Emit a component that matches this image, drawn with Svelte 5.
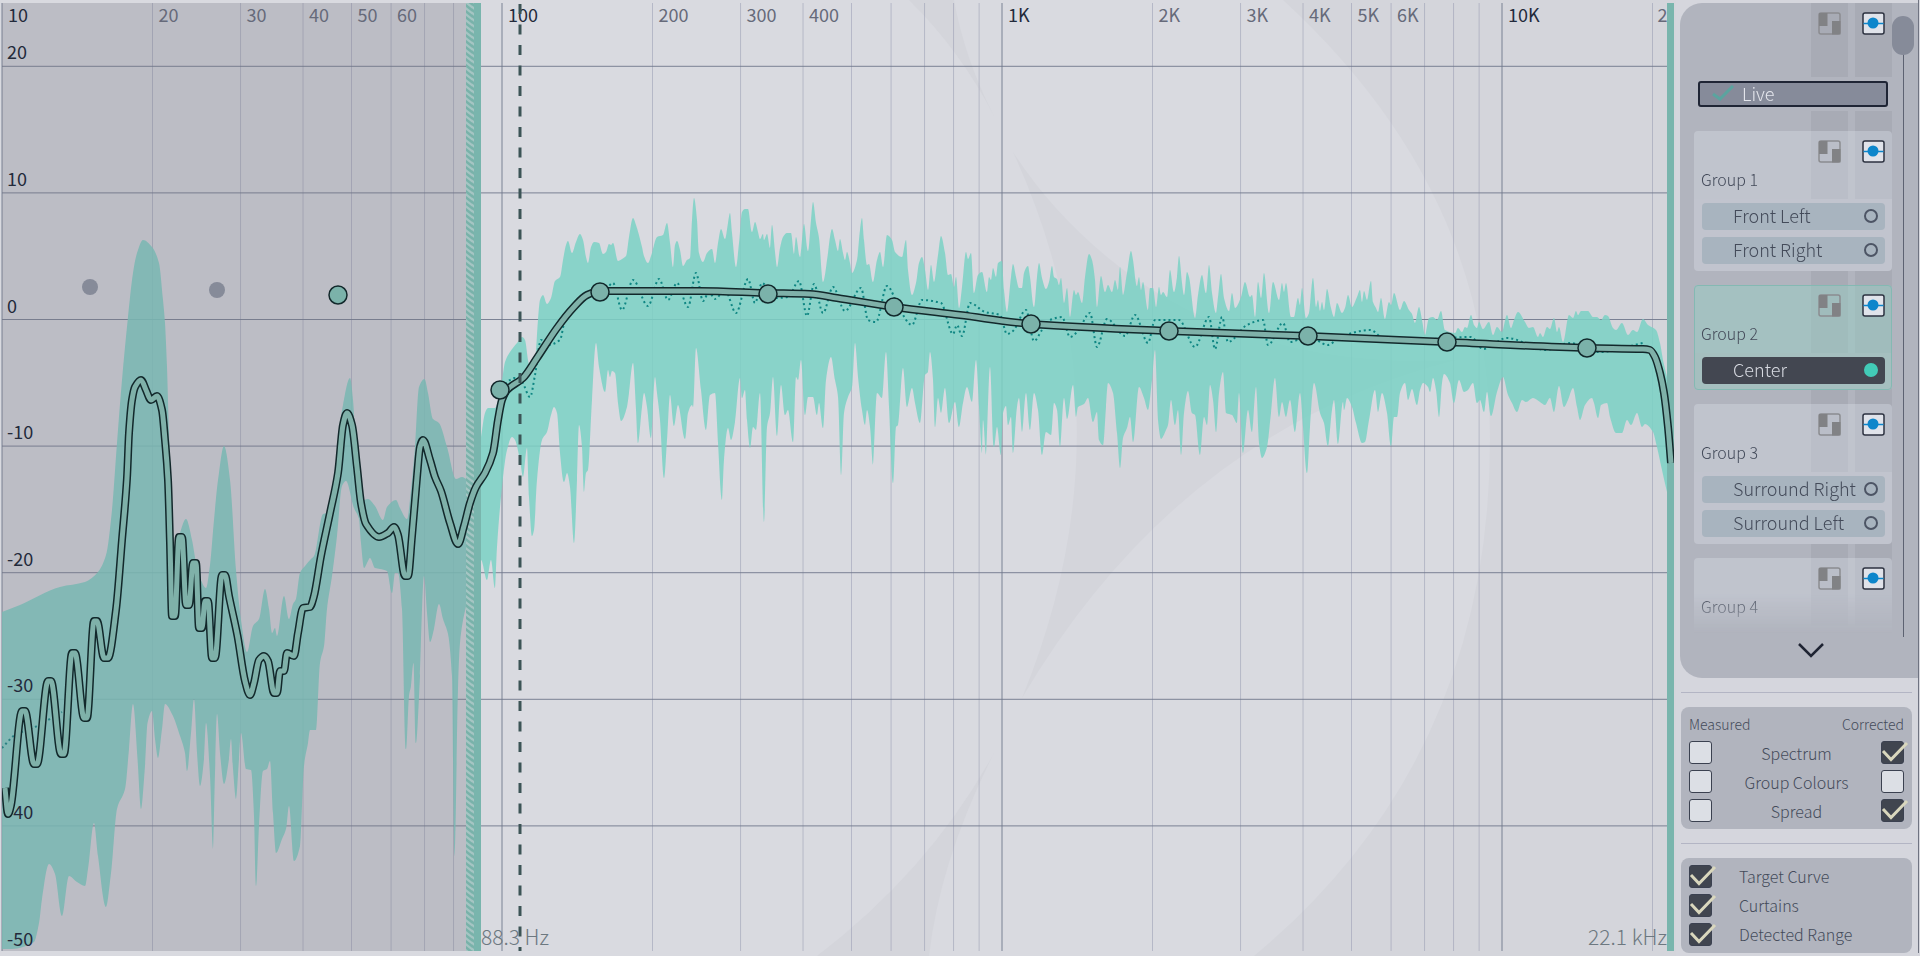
<script lang="ts">
  type Point = [number, number];

  const parse = (data: string): Point[] =>
    data.trim().split(/\s+/).map((pair) => pair.split(',').map(Number) as Point);

  // Monotone cubic through the points, so peaks stay where they were measured
  function curve(points: Point[], start = 'M'): string {
    const slope = (i: number) =>
      (points[i + 1][1] - points[i][1]) / (points[i + 1][0] - points[i][0]);
    const tangents = points.map((_, i) => {
      if (i === 0) return slope(0);
      if (i === points.length - 1) return slope(i - 1);
      const a = slope(i - 1);
      const b = slope(i);
      return a * b <= 0 ? 0 : (2 * a * b) / (a + b);
    });
    let d = `${start}${points[0][0]} ${points[0][1]}`;
    for (let i = 1; i < points.length; i++) {
      const [x0, y0] = points[i - 1];
      const [x1, y1] = points[i];
      const dx = (x1 - x0) / 3;
      d += `C${x0 + dx} ${y0 + dx * tangents[i - 1]} ${x1 - dx} ${y1 - dx * tangents[i]} ${x1} ${y1}`;
    }
    return d;
  }

  const upper = parse(`
    2,612 20,605 60,587 85,582 98,572 106,555 112,510 117,443 122,380 127.7,320 133,273 137,253 143,240 152,247 159,263
    163,300 165,323 167,367 169,433 171,480 175,560 180,533 186,519 192,540 196,562 201,580 206,588 210,565 214,520
    218,480 224,446 230,480 236,570 241,620 247,652 253,626 259,619 265,589 269,609 272,633 275,628 277,636 284,596
    289,619 293,604 296,599 300,573 305,566 311,559 314,556 323,514 327,513 334,486 338,440 343,405 350,378 353,400
    356,450 361,501 368,499 375,506 383,520 387,507 396,500 400,508 407,519 411,490 415,447 419,387 424.5,379 428,393
    433,419 439,423 447,447 456,479 462,477 467,479 475,470 481,437 485,413 488,408 495,408 502,380 505,362 510,352
    517,343 522,337 525,340 528,360 531,372 535,360 538,320 540,300 543,295 547,304 551,298 555,281 560,277 563,260
    566,245 568,241 572,253 576,242 580,234 583,240 586,257 588,263 591,247 594,242 599,243 603,254 606,252 609,244
    611,245 613,243 618,261 622,259 626,256 629,237 633,218 636,225 642,247 644,256 648,263 651,256 657,237 663,235
    667,223 670,243 673,267 675,245 677,241 680,250 683,266 687,260 690,258 692,220 694,198 697,220 699,253 703,262
    707,253 712,249 715,263 718,243 721,229 725,239 728,223 730,213 732,233 736,267 739,243 742,212 745,209 748,209
    752,232 755,222 758,232 760,239 763,234 764,240 767,234 770,248 772,225 775,252 777,267 780,248 783,237 787,233
    791,233 794,254 796,237 800,257 804,224 808,251 811,220 813,202 816,223 819,238 823,282 828,253 830,237 832,229
    835,240 838,251 840,239 843,253 845,260 847,252 850,263 852,273 857,260 860,230 862,218 864,240 867,265 869,264
    873,282 877,260 880,252 883,267 887,235 892,240 895,252 902,257 906,240 908,270 912,295 916,283 919,263 922,257
    925,270 928,290 931,265 934,282 938,255 941,236 945,253 948,275 951,274 954,287 956,277 959,308 962,287 966,252
    968,259 971,253 974,293 978,275 982,272 987,292 989,277 991,280 993,268 996,277 998,263 1002,261 1004,290 1007,312
    1011,277 1013,264 1016,277 1019,288 1022,288 1024,273 1028,266 1030,277 1034,307 1037,277 1039,263 1042,278
    1046,289 1049,282 1052,266 1054,277 1057,279 1059,285 1061,278 1064,303 1067,288 1070,317 1074,290 1076,295
    1078,292 1082,303 1085,277 1089,254 1092,260 1095,280 1097,307 1101,276 1105,292 1108,285 1112,292 1115,280
    1118,290 1120,267 1123,295 1127,273 1131,251 1133,260 1137,286 1139,277 1141,290 1143,282 1148,310 1150,288
    1153,288 1156,307 1159,287 1161,295 1163,292 1167,297 1170,270 1174,292 1177,277 1179,256 1182,283 1184,295
    1187,272 1189,277 1195,318 1198,295 1202,275 1206,293 1209,265 1212,293 1216,313 1218,297 1221,274 1224,298
    1229,311 1232,293 1235,308 1241,297 1245,282 1250,297 1252,295 1255,317 1258,282 1261,298 1264,273 1269,313
    1273,282 1279,300 1282,283 1284,292 1286,283 1291,317 1294,317 1298,298 1300,305 1302,288 1306,318 1309,313
    1313,278 1316,307 1318,300 1320,311 1322,302 1324,310 1327,289 1331,308 1334,317 1337,303 1342,313 1345,308
    1348,295 1352,307 1357,297 1360,290 1362,302 1364,291 1367,300 1371,281 1373,302 1376,308 1378,312 1381,298
    1385,319 1389,302 1391,305 1394,293 1400,310 1404,301 1409,310 1412,314 1415,323 1419,307 1422,320 1425,335
    1429,318 1433,317 1437,320 1441,311 1445,330 1455,333 1458,328 1462,332 1465,327 1467,328 1471,315 1474,325
    1477,328 1479,322 1483,329 1489,322 1493,335 1497,327 1502,332 1507,315 1511,328 1514,320 1518,312 1525,322
    1529,328 1533,327 1538,337 1540,333 1543,337 1547,327 1550,329 1554,318 1557,332 1559,327 1563,342 1569,315
    1573,318 1576,311 1578,315 1581,311 1588,311 1593,317 1597,317 1601,320 1605,315 1608,316 1613,328 1616,330
    1622,323 1628,335 1633,330 1637,332 1643,319 1648,325 1656,330 1660,343 1663,360 1667,377 1674,410`);

  const lower = parse(`
    2,949 12,949 34,942 39,923 42,899 49,864 55,874 62,916 69,876 77,882 85,886 88,869 94,823 98,856 106,907 111,873
    117,809 125,789 129,749 133,704 137.5,759 141,809 145,766 147.5,723 152,711 155,739 158,758 162,729 165,704
    173,716 179,733 185,753 187,771 191,733 194,699 197,753 200,786 204,759 206,723 210,776 213,849 215,773 217,714
    220,753 224,784 229,759 231,739 233,769 236,799 239,759 241,733 246,769 251,770 254,816 256,886 259,826 263,771
    267,769 270,761 273,813 276,853 282,839 286,829 289,806 294,861 300,846 304,766 308,743 310,730 316,730 320,663
    324,646 327,609 332,576 337,536 342,486 346,481 354,508 359,519 361,543 364,568 368,561 370,558 375,568 380,569
    387,571 392,593 395,573 398,573 402,609 406,749 409,696 411,686 413.5,663 416,743 420,676 424,576 427,613 430,642
    434,629 439,604 443,619 448,634 452,676 454.5,856 458,689 460,643 465,611 481,560 487,580 491,560 495,588 497,547
    502,487 507,450 512,437 515,440 520,460 523,477 527,448 529,497 532,536 534,530 537,480 542,440 547,432 551,415
    554,407 557,413 560,453 564,482 567,473 570,487 574,543 577,480 579,425 582,447 584,492 586,473 588,470 592,400
    596,343 599,367 605,392 608,370 610,377 612,371 615,373 618,403 621,421 627,407 629,393 633,363 636,410 638,443
    642,407 644,393 647,407 651,438 655,377 657,393 660,420 664,478 667,440 670,395 674,426 678,405 685,439 688,413
    692,405 693,407 696,348 701,390 706,430 710,395 715,393 718,443 722,500 724,460 728,428 731,440 735,422 740,378
    742,398 745,390 747,420 750,448 753,427 756,430 760,393 764,522 767,427 770,413 773,377 777,436 781,385 785,415
    788,410 793,442 796,377 798,380 801,360 805,415 808,397 813,397 817,415 819,403 823,428 826,380 831,357 835,380
    838,397 841,475 844,413 848,397 852,387 855,343 858,377 862,410 865,425 867,410 870,427 873,465 877,393 882,398
    886,352 889,407 893,483 896,427 898,425 903,368 907,407 912,388 915,403 920,423 925,375 928,372 930,352 933,380
    935,427 938,398 941,413 945,388 949,423 955,402 959,427 963,403 967,387 972,402 976,360 979,407 982,453 983,420
    986,455 990,367 994,447 997,427 1001,455 1003,413 1006,406 1008,425 1011,417 1013,453 1017,407 1019,398 1022,432
    1026,393 1030,430 1034,393 1038,410 1042,455 1046,432 1051,435 1054,403 1057,410 1060,447 1064,398 1067,419
    1073,385 1076,417 1078,407 1084,404 1088,398 1093,422 1097,412 1099,440 1103,445 1106,407 1108,383 1113,393
    1117,433 1120,468 1123,438 1127,428 1130,417 1133,442 1139,387 1144,398 1148,410 1152,380 1155,350 1158,420
    1161,439 1166,430 1168,425 1171,400 1175,425 1178,410 1181,455 1184,413 1188,391 1192,413 1195,415 1200,455
    1204,417 1207,425 1210,385 1213,400 1216,432 1219,393 1223,372 1226,413 1232,415 1237,423 1239,393 1243,453
    1248,410 1252,432 1256,387 1259,443 1262,458 1267,447 1271,413 1275,378 1279,417 1282,402 1286,417 1290,400
    1295,432 1300,393 1303,427 1307,473 1310,427 1314,383 1320,413 1324,423 1328,446 1332,410 1334,400 1338,444
    1343,402 1344,410 1347,398 1352,407 1356,423 1362,443 1365,442 1369,420 1375,390 1378,412 1382,393 1387,413
    1391,446 1394,417 1397,417 1400,393 1405,383 1408,400 1412,389 1417,405 1420,390 1423,383 1428,387 1430,392
    1433,378 1436,390 1439,417 1442,383 1444,374 1450,383 1454,403 1459,380 1464,392 1468,390 1473,383 1477,403
    1480,400 1484,412 1487,392 1491,416 1497,392 1503,377 1508,395 1512,403 1517,412 1522,400 1526,402 1533,398
    1540,402 1545,405 1550,398 1554,412 1559,386 1564,407 1568,400 1573,388 1577,407 1580,420 1585,405 1592,398
    1594,403 1598,418 1601,405 1607,403 1610,417 1616,433 1622,433 1627,420 1631,425 1637,413 1642,427 1645,424
    1653,432 1657,447 1662,470 1667,492 1674,520`);

  const spectrum = parse(`
    5,788 8,814 11,805 22,711 25,711 34,764 37,764 48,681 51,681 61,754 64,754 72,653 75,653 84,718 87,718 94,621
    97,621 104,658 108,658 116,610 122,540 127,478 129,433 132,400 135,387 141,380 146,390 151,400 157,396 162,410
    165,440 168,480 170,543 172,616 175,616 179,537 182,537 186,605 189,605 193,563 196,563 199,628 202,628 205,601
    208,601 212,658 215,658 222,575 225,575 229,596 237.5,636 245,681 250,695 254,683 259,660 264,656 268,661
    274,693 277,693 280,671 284,671 287,653 294,656 298,633 303,608 310,607 314,596 321,556 330,513 338,473 343,425
    347,413 352,425 357,467 361,503 366,524 379,537 388,533 394,527 398,535 405,576 408,576 412,536 417,477 420,447
    423,440 430,460 435,477 441,491 450,523 458,544 464,526 470,503 476,487 485,473 493,453 498,420 502,400 507,390
    523,378 537,358 557,328 573,308 587,295 600,291 700,291 767,293 810,294 837,298 894,307 960,315 1031,324
    1169,331 1308,336 1447,342 1587,348 1643,349 1650,350 1655,357 1660,373 1664,393 1668,427 1671,463`);

  const averageStart = parse('2,748 15,735 35,727 62,712');
  const average = parse(`
    502,388 510,380 515,378 522,382 530,397 535,375 541,340 548,345 560,340 565,320
    590,295 600,297 613,283 622,310 633,280 648,306 659,279 668,300 677,283 688,307 696,273 703,301 709,292 715,299
    725,290 736,313 748,279 755,303 762,283 775,298 788,297 799,281 807,316 814,284 823,313 833,287 845,311 861,288
    868,320 876,322 887,286 900,310 912,325 922,300 941,303 953,334 957,325 962,336 970,303 985,312 1000,315
    1007,334 1013,331 1026,310 1034,341 1042,330 1050,320 1062,317 1070,337 1078,331 1090,313 1097,347 1107,319
    1125,336 1135,315 1148,343 1155,320 1179,320 1195,347 1209,317 1215,349 1222,317 1228,342 1247,325 1263,320
    1268,345 1283,323 1290,342 1308,336 1328,345 1340,337 1370,330 1388,342 1471,337 1483,349 1507,338 1546,350
    1570,343 1600,352 1643,343`);

  const envelope = `${curve(upper)}${curve([...lower].reverse(), 'L')}Z`;
  const spectrumPath = curve(spectrum);
  const averagePath = curve(averageStart) + curve(average);

  const handles: Point[] = [
    [338, 295], [500, 390], [600, 292], [768, 294], [894, 307], [1031, 324],
    [1169, 331], [1308, 336], [1447, 342], [1587, 348],
  ];
  const disabledHandles: Point[] = [[90, 287], [217, 290]];

  const xAt = (hz: number) => 2 + 500 * Math.log10(hz / 10);
  const yAt = (db: number) => 319.5 - 12.66 * db;

  const frequencies = [10, 100, 1000, 10000]
    .flatMap((decade) => [1, 2, 3, 4, 5, 6, 7, 8, 9].map((step) => ({ hz: decade * step, step })))
    .filter(({ hz }) => hz <= 20000);
  const decibels = [20, 10, 0, -10, -20, -30, -40];

  const axisLabels = frequencies.filter(
    ({ hz, step }) => step < 5 || (step < 7 && (hz < 100 || hz >= 1000)),
  );
  const formatHz = (hz: number) => (hz >= 1000 ? `${hz / 1000}K` : `${hz}`);

  const groups: { name: string; active: boolean; channels: string[] }[] = [
    { name: 'Group 1', active: false, channels: ['Front Left', 'Front Right'] },
    { name: 'Group 2', active: true, channels: ['Center'] },
    { name: 'Group 3', active: false, channels: ['Surround Right', 'Surround Left'] },
    { name: 'Group 4', active: false, channels: [] },
  ];

  let spectra = $state([
    { name: 'Spectrum', measured: false, corrected: true },
    { name: 'Group Colours', measured: false, corrected: false },
    { name: 'Spread', measured: false, corrected: true },
  ]);
  let overlays = $state([
    { name: 'Target Curve', on: true },
    { name: 'Curtains', on: true },
    { name: 'Detected Range', on: true },
  ]);
</script>

{#snippet tick()}
  <svg class="box__tick" viewBox="0 0 28 24" aria-hidden="true">
    <path d="M2 10L10 18.500L26 2" />
  </svg>
{/snippet}

{#snippet viewButtons()}
  <button class="icon-button" aria-label="Split view">
    <svg viewBox="0 0 23 23">
      <rect x="1" y="1" width="21" height="21" rx="2" fill="none" stroke="#8b8c90" stroke-width="1.500" />
      <path d="M1 1h8.500v13H1zM14 9h8.500v13.500H14z" fill="#818285" />
    </svg>
  </button>
  <button class="icon-button" aria-label="Show curve">
    <svg viewBox="0 0 23 23">
      <rect x="1" y="1" width="21" height="21" rx="2" fill="#e0e3ea" stroke="#2c3240" stroke-width="1.500" />
      <path d="M1.500 11.500h20" stroke="#0d86cb" stroke-width="1.500" />
      <circle cx="11" cy="11" r="5.500" fill="#0d86cb" />
    </svg>
  </button>
{/snippet}

<div class="app">
  <main class="chart">
    <svg class="chart__plot" viewBox="0 0 1676 956" role="img" aria-label="Frequency response">
      <defs>
        <pattern id="hatch" width="8" height="6" patternUnits="userSpaceOnUse">
          <rect width="8" height="6" fill="#a5c5c3" />
          <path d="M-1 -3L9 5M-1 3L9 11" stroke="#79b2aa" stroke-width="2.500" />
        </pattern>
        <clipPath id="plot-area"><rect x="2" y="3" width="1672" height="948" /></clipPath>
      </defs>

      <g class="watermark">
        <path d="M909 0Q960 50 994 116Q965 60 954 0Z" />
        <path d="M1013 152Q1060 225 1137 280Q1270 370 1456 360Q1180 430 1022 698Q1136 420 1013 152Z" />
        <path d="M1283 0Q1490 190 1490 440Q1490 760 1254 956H1676V0Z" />
        <path d="M817 956Q930 870 994 753Q940 860 929 956Z" />
      </g>

      {#each frequencies as { hz, step }}
        <line class="grid" class:grid--major={step === 1} x1={xAt(hz)} x2={xAt(hz)} y1="3" y2="951" />
      {/each}
      {#each decibels as db}
        <line class="grid grid--major" x1="2" x2="1667" y1={yAt(db)} y2={yAt(db)} />
      {/each}

      <g clip-path="url(#plot-area)">
        <path class="envelope" d={envelope} />
        <path class="average" d={averagePath} />
      </g>

      <rect class="curtain" x="2" y="3" width="465" height="948" />
      <rect x="466" y="3" width="8" height="948" fill="url(#hatch)" />
      <rect class="curtain-edge" x="474" y="3" width="7" height="948" />

      {#each axisLabels as { hz, step }}
        {#if hz < 20000}
          <text class="axis" class:axis--major={step === 1} x={xAt(hz) + 6} y="22">{formatHz(hz)}</text>
        {:else}
          <text class="axis" x={xAt(hz) + 5} y="22">2</text>
        {/if}
      {/each}
      {#each [...decibels, -50] as db}
        <text class="axis axis--major" x="7" y={yAt(db) - 7}>{db}</text>
      {/each}

      <rect class="curtain-edge" x="1667" y="3" width="7" height="948" />

      <g clip-path="url(#plot-area)">
        <path class="spectrum-outline" d={spectrumPath} />
        <path class="spectrum" d={spectrumPath} />
      </g>
      <line class="cursor" x1="520" x2="520" y1="4" y2="951" />

      {#each disabledHandles as [cx, cy]}
        <circle class="handle handle--disabled" {cx} {cy} r="8" />
      {/each}
      {#each handles as [cx, cy]}
        <circle class="handle" {cx} {cy} r="9" />
      {/each}

      <text class="limit" x="481" y="945">88.3 Hz</text>
      <text class="limit" x="1667" y="945" text-anchor="end">22.1 kHz</text>
    </svg>
  </main>

  <aside class="sidebar">
    <section class="panel">
      <div class="panel__body">
        <div class="list">
          <div class="list__header list__header--top">
            <span></span>
            {@render viewButtons()}
          </div>
          <div class="live">
            <button class="live__button">
              <svg viewBox="0 0 22 16" aria-hidden="true"><path d="M1 9L8 14L21 1" /></svg>
              Live
            </button>
          </div>
          <div class="groups">
            {#each groups as group}
              <div class="group" class:group--active={group.active}>
                <div class="list__header">
                  <h2>{group.name}</h2>
                  {@render viewButtons()}
                </div>
                <div class="group__channels">
                  {#each group.channels as channel}
                    <button class="channel" class:channel--active={group.active}>
                      {channel}
                      <span class="channel__dot"></span>
                    </button>
                  {/each}
                </div>
              </div>
            {/each}
          </div>
        </div>
        <div class="scroll"><div class="scroll__thumb"></div></div>
      </div>
      <button class="more" aria-label="Scroll down">
        <svg viewBox="0 0 28 16"><path d="M2 2L14 14L26 2" /></svg>
      </button>
    </section>

    <hr />

    <div class="card">
      <table class="options">
        <colgroup>
          <col class="options__box" />
          <col />
          <col />
          <col class="options__box" />
        </colgroup>
        <thead>
          <tr>
            <th colspan="2">Measured</th>
            <th colspan="2" class="options__corrected">Corrected</th>
          </tr>
        </thead>
        <tbody>
          {#each spectra as row}
            <tr>
              <td>
                <label class="box">
                  <input type="checkbox" bind:checked={row.measured} aria-label="{row.name} measured" />
                  {@render tick()}
                </label>
              </td>
              <td colspan="2" class="options__name">{row.name}</td>
              <td>
                <label class="box">
                  <input type="checkbox" bind:checked={row.corrected} aria-label="{row.name} corrected" />
                  {@render tick()}
                </label>
              </td>
            </tr>
          {/each}
        </tbody>
      </table>
    </div>

    <hr />

    <div class="card overlays">
      {#each overlays as overlay}
        <label class="overlays__row">
          <span class="box">
            <input type="checkbox" bind:checked={overlay.on} />
            {@render tick()}
          </span>
          <span class="overlays__name">{overlay.name}</span>
        </label>
      {/each}
    </div>
  </aside>
</div>

<style>
  :global(body) {
    background: #d5d6dd;
  }

  .app {
    display: grid;
    grid-template-columns: minmax(0, 1fr) 244px;
    align-items: start;
    font-family: 'Noto Sans CJK SC', 'Noto Sans', sans-serif;
    font-weight: 300;
    color: #444b5a;
  }

  button {
    padding: 0;
    border: 0;
    background: none;
    font: inherit;
    color: inherit;
    cursor: pointer;
  }

  .chart {
    background: #d9dae0;
  }

  .chart__plot {
    display: block;
    width: 100%;
    height: auto;
  }

  .watermark {
    fill: #d4d5db;
  }

  .grid {
    stroke: #8a8ea8;
    stroke-opacity: 0.45;
    stroke-width: 1;
  }

  .grid--major {
    stroke: #70788c;
    stroke-opacity: 0.9;
  }

  .envelope {
    fill: #7cd2c5;
    fill-opacity: 0.86;
  }

  .average {
    fill: none;
    stroke: #0f8683;
    stroke-width: 2;
    stroke-dasharray: 2 3;
  }

  .curtain {
    fill: rgba(116, 115, 128, 0.28);
  }

  .curtain-edge {
    fill: #79b5ad;
  }

  .spectrum-outline,
  .spectrum {
    fill: none;
    stroke: #12282b;
    stroke-width: 8;
    stroke-linejoin: round;
  }

  .spectrum {
    stroke: #7fb1a9;
    stroke-width: 5;
  }

  .handle {
    fill: #7bb2aa;
    stroke: #12282b;
    stroke-width: 1.5;
  }

  .handle--disabled {
    fill: #868b99;
    stroke: none;
  }

  .cursor {
    stroke: #3c5456;
    stroke-width: 3;
    stroke-dasharray: 10 10.5;
  }

  .axis {
    fill: #666a7a;
    font-size: 18px;
    font-weight: 400;
  }

  .axis--major {
    fill: #232a3b;
  }

  .limit {
    fill: #6d7880;
    font-size: 21px;
  }

  .sidebar {
    margin-right: 1px;
    padding: 3px 0 0 4px;
    border-right: 1px solid #6f7381;
  }

  .panel {
    border-radius: 22px 0 0 22px;
    background: #b1b4be;
    overflow: hidden;
  }

  .panel__body {
    display: flex;
    height: 634px;
    padding-left: 14px;
  }

  .list {
    width: 198px;
    overflow: hidden;
    background: linear-gradient(
      to right,
      transparent 117px,
      #a8abb5 117px 154px,
      transparent 154px 161px,
      #a8abb5 161px
    );
    mask-image: linear-gradient(#000 calc(100% - 44px), transparent calc(100% - 4px));
  }

  .list__header {
    display: grid;
    grid-template-columns: 1fr 37px 37px;
    column-gap: 7px;
    height: 59px;
    padding-top: 9px;
  }

  .list__header--top {
    height: 65px;
  }

  .icon-button {
    align-self: start;
    padding-left: 7px;
    text-align: left;
    line-height: 0;
  }

  .icon-button svg {
    width: 23px;
    height: 23px;
  }

  h2 {
    align-self: end;
    margin: 0 0 8px 7px;
    font-size: 16px;
    font-weight: 300;
    line-height: 24px;
  }

  .live {
    padding: 4px;
    background: #b1b4be;
  }

  .live__button {
    display: flex;
    align-items: center;
    gap: 8px;
    box-sizing: border-box;
    width: 100%;
    height: 26px;
    padding: 0 0 2px 12px;
    border: 2px solid #1f2535;
    border-radius: 3px;
    background: #868b9a;
    font-size: 18px;
    color: #e4e6ec;
  }

  .live__button svg {
    width: 22px;
    height: 16px;
    fill: none;
    stroke: #5aa49f;
    stroke-width: 3;
  }

  .groups {
    display: flex;
    flex-direction: column;
    gap: 14px;
    padding-top: 20px;
  }

  .group {
    border-radius: 4px;
    overflow: hidden;
  }

  .group .list__header {
    background: rgba(222, 226, 236, 0.35);
  }

  .group__channels {
    display: flex;
    flex-direction: column;
    gap: 7px;
    padding: 4px 7px 7px 8px;
    background: #c1c4ce;
  }

  .group--active {
    outline: 1px solid #84b9b3;
    outline-offset: -1px;
  }

  .group--active .list__header {
    background: rgba(152, 205, 196, 0.5);
  }

  .group--active .group__channels {
    padding-bottom: 6px;
    background: #a5bfbf;
  }

  .channel {
    display: flex;
    align-items: center;
    justify-content: space-between;
    box-sizing: border-box;
    height: 27px;
    padding: 0 7px 3px 31px;
    border-radius: 4px;
    background: #a8b4bf;
    font-size: 18px;
  }

  .channel__dot {
    box-sizing: border-box;
    width: 14px;
    height: 14px;
    margin-top: 2px;
    border: 2px solid #4d5565;
    border-radius: 50%;
  }

  .channel--active {
    background: #434751;
    color: #d7dae1;
  }

  .channel--active .channel__dot {
    border-color: #42cbb7;
    background: #42cbb7;
  }

  .scroll {
    width: 22px;
    padding-top: 13px;
    background: linear-gradient(#5d6271, #5d6271) 11px 20px / 1px 100% no-repeat;
  }

  .scroll__thumb {
    height: 39px;
    border-radius: 11px;
    background: #868b99;
  }

  .more {
    display: block;
    width: 100%;
    height: 41px;
    padding-left: 24px;
    line-height: 0;
  }

  .more svg {
    width: 28px;
    height: 16px;
    margin-bottom: 16px;
    fill: none;
    stroke: #1f2433;
    stroke-width: 2.5;
  }

  hr {
    height: 1px;
    margin: 14px 6px 14px 1px;
    border: 0;
    background: #b3b5c4;
  }

  .card {
    margin: 0 6px 0 1px;
    padding: 5px 8px 4px;
    border-radius: 8px;
    background: #b1b4be;
    font-size: 16px;
    line-height: 24px;
  }

  .options {
    width: 100%;
    border-collapse: collapse;
    table-layout: fixed;
  }

  .options__box {
    width: 23px;
  }

  th,
  td {
    height: 29px;
    padding: 0;
    font-weight: 300;
  }

  th {
    height: 26px;
    font-size: 14px;
    text-align: left;
    vertical-align: top;
  }

  .options__corrected {
    text-align: right;
  }

  .options__name {
    text-align: center;
  }

  .box {
    position: relative;
    display: block;
    width: 23px;
    height: 23px;
  }

  input {
    appearance: none;
    display: block;
    box-sizing: border-box;
    width: 23px;
    height: 23px;
    margin: 0;
    border: 1px solid #3b4150;
    border-radius: 3px;
    background: #dcdfe5;
  }

  input:checked {
    background: #40454f;
  }

  .box__tick {
    position: absolute;
    top: 0;
    left: 0;
    display: none;
    width: 28px;
    height: 24px;
    fill: none;
    stroke: #d9d7bd;
    stroke-width: 3;
    pointer-events: none;
  }

  input:checked + .box__tick {
    display: block;
  }

  .overlays {
    display: flex;
    flex-direction: column;
    gap: 6px;
    padding: 7px 8px;
  }

  .overlays__row {
    display: flex;
    align-items: center;
    gap: 27px;
    height: 23px;
  }

  .overlays__name {
    padding-bottom: 2px;
  }
</style>
